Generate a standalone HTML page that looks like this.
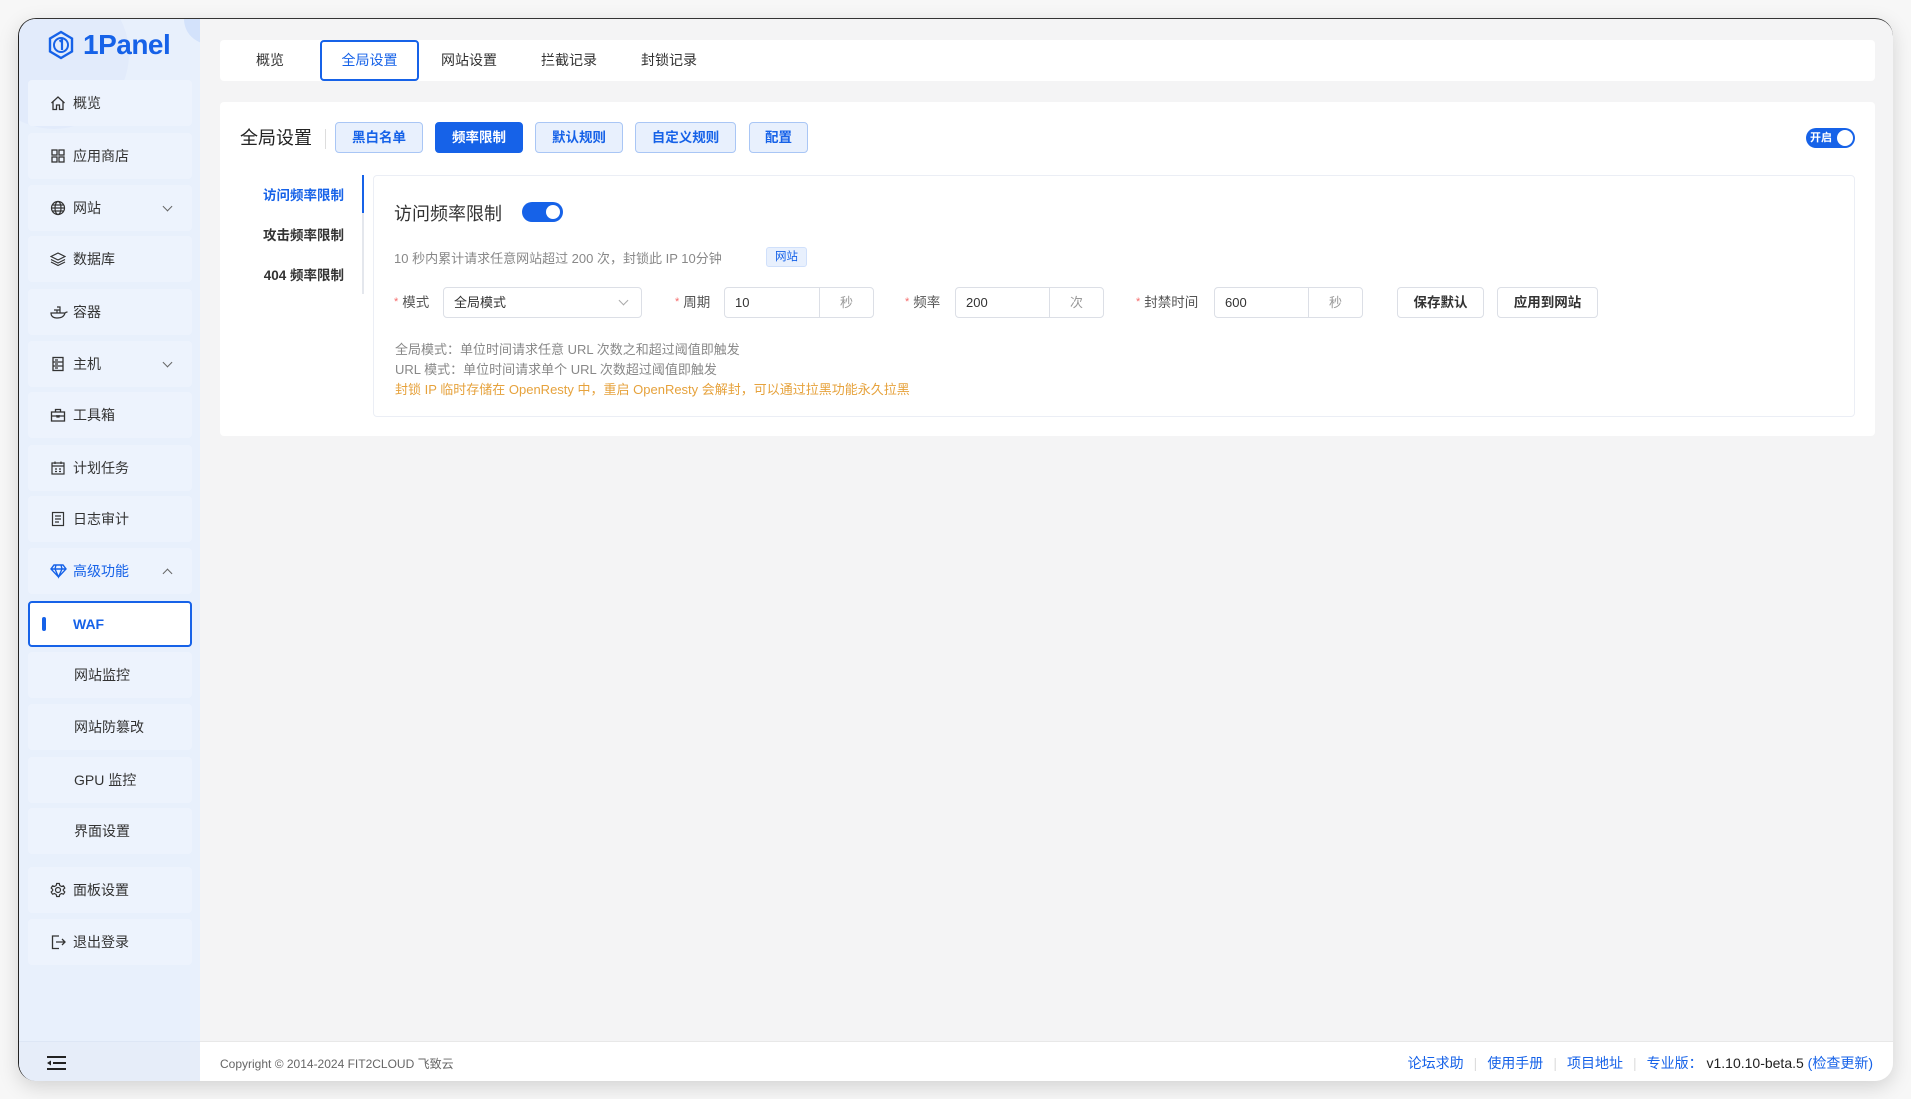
<!DOCTYPE html>
<html><head><meta charset="utf-8"><style>
*{box-sizing:border-box;margin:0;padding:0}
body{width:1911px;height:1099px;background:#f7f7f7;font-family:"Liberation Sans","Noto Sans CJK SC",sans-serif;position:relative;overflow:hidden;color:#1f2329}
.win{position:absolute;left:18px;top:18px;width:1875px;height:1063px;border-radius:18px;overflow:hidden;background:#f4f4f5;box-shadow:0 6px 20px rgba(0,0,0,.15);border-top:1.5px solid #333;border-left:1.5px solid #222}
.side{position:absolute;left:0;top:0;width:181px;height:100%;background:#e8f0fc;overflow:hidden}
.side .deco{position:absolute;left:-40px;top:-40px;width:150px;height:150px;border-radius:50%;background:#e2ebfb}
.side .deco2{position:absolute;left:165px;top:-25px;width:50px;height:50px;border-radius:50%;background:#d3e2fb}
.logo{position:absolute;left:28px;top:10px;display:flex;align-items:center;color:#1662e8;font-weight:bold;font-size:28px;letter-spacing:-.5px}
.mi{position:absolute;left:9px;width:164px;height:46px;background:#edf3fd;border-radius:4px;display:flex;align-items:center;font-size:14px;color:#333;padding-left:45px}
.mi svg{position:absolute;left:22px;top:15px}
.mi .ar{position:absolute;left:136px;top:18px;width:7px;height:7px;border-right:1px solid #666;border-bottom:1px solid #666;transform:rotate(45deg)}
.mi .up{transform:rotate(-135deg);top:22px}
.sub{padding-left:46px}
.waf{background:#fff;border:2px solid #1662e8;color:#1662e8;font-weight:bold;padding-left:43px}
.waf:before{content:"";position:absolute;left:12px;top:14px;width:4px;height:14px;border-radius:2px;background:#1662e8}
.sfoot{position:absolute;left:0;top:1022px;width:181px;height:41px;background:#e6edf9;border-top:1px solid #dde6f5}
.main{position:absolute;left:181px;top:0;right:0;bottom:0}
.card{position:absolute;background:#fff;border-radius:4px}
.tab{position:absolute;top:0;height:41px;line-height:41px;font-size:14px;color:#333;text-align:center}
.btn{position:absolute;top:20px;height:31px;line-height:29px;border:1px solid #a9c6f5;background:#e8f0fd;color:#1662e8;border-radius:4px;font-size:13.5px;font-weight:bold;text-align:center}
.btn.on{background:#1662e8;border-color:#1662e8;color:#fff}
.inp{position:absolute;top:111px;height:31px;border:1px solid #dcdfe6;border-radius:4px;font-size:13px;color:#333;line-height:29px;padding-left:10px}
.inp .suf{position:absolute;right:0;top:0;bottom:0;border-left:1px solid #dcdfe6;color:#999;text-align:center}
.lbl{position:absolute;top:111px;line-height:31px;font-size:13.5px;color:#555}
.lbl b{color:#f56c6c;font-weight:normal;font-size:11px;margin-right:4px;vertical-align:top}
.pb{position:absolute;top:111px;height:31px;line-height:29px;border:1px solid #dcdfe6;border-radius:4px;font-size:13.5px;color:#333;text-align:center;font-weight:bold}
.note{position:absolute;left:21px;font-size:13px;color:#888}
.ft{position:absolute;left:0;right:0;top:1022px;height:41px;background:#fff;border-top:1px solid #e8e8e8;font-size:12.5px}
.ft a{color:#1662e8;text-decoration:none}
</style></head><body>
<div class="win">
 <div class="side">
  <div class="deco"></div><div class="deco2"></div>
  <div class="logo"><svg width="28" height="30" viewBox="0 0 28 30"><path d="M14 2L25 8.5V21.5L14 28L3 21.5V8.5Z" fill="none" stroke="#1662e8" stroke-width="2.4"/><circle cx="14" cy="15" r="7" fill="none" stroke="#1662e8" stroke-width="2"/><path d="M12.5 11.5L15 10V20" stroke="#1662e8" stroke-width="2.2" fill="none"/></svg><span style="margin-left:8px">1Panel</span></div>
  <div class="mi" style="top:61px"><svg width="16" height="16" viewBox="0 0 16 16" fill="none" stroke="#333" stroke-width="1.3"><path d="M1.5 8L8 2L14.5 8M3 7V14.5H6.5V10H9.5V14.5H13V7"/></svg>概览</div>
  <div class="mi" style="top:114px"><svg width="16" height="16" viewBox="0 0 16 16" fill="none" stroke="#333" stroke-width="1.3"><rect x="2" y="2" width="5" height="5"/><rect x="9" y="2" width="5" height="5"/><rect x="2" y="9" width="5" height="5"/><rect x="9" y="9" width="5" height="5"/></svg>应用商店</div>
  <div class="mi" style="top:166px"><svg width="16" height="16" viewBox="0 0 16 16" fill="none" stroke="#333" stroke-width="1.2"><circle cx="8" cy="8" r="6.5"/><ellipse cx="8" cy="8" rx="3" ry="6.5"/><path d="M1.5 8H14.5M2.5 5H13.5M2.5 11H13.5"/></svg>网站<span class="ar"></span></div>
  <div class="mi" style="top:217px"><svg width="16" height="16" viewBox="0 0 16 16" fill="none" stroke="#333" stroke-width="1.2"><path d="M8 2L15 5.5L8 9L1 5.5Z M1 8.5L8 12L15 8.5 M1 11L8 14.5L15 11"/></svg>数据库</div>
  <div class="mi" style="top:270px"><svg width="18" height="16" viewBox="0 0 18 16" fill="none" stroke="#333" stroke-width="1.2"><path d="M1 9H15C14 13 10 14 7 14C3 14 1 12 1 9ZM4 6H7V9M7 6H10V9M7 3H10V6M15 9C16 8 17 8 17.5 8"/></svg>容器</div>
  <div class="mi" style="top:322px"><svg width="16" height="16" viewBox="0 0 16 16" fill="none" stroke="#333" stroke-width="1.3"><rect x="3" y="1.5" width="10" height="13"/><path d="M3 6H13M3 10H13M5 4H8M5 8H8M5 12H8"/></svg>主机<span class="ar"></span></div>
  <div class="mi" style="top:373px"><svg width="16" height="16" viewBox="0 0 16 16" fill="none" stroke="#333" stroke-width="1.3"><rect x="1.5" y="5" width="13" height="9"/><path d="M5.5 5V2.5H10.5V5M1.5 9H14.5M7 8V10H9V8"/></svg>工具箱</div>
  <div class="mi" style="top:426px"><svg width="16" height="16" viewBox="0 0 16 16" fill="none" stroke="#333" stroke-width="1.2"><rect x="2" y="3" width="12" height="11"/><path d="M2 6H14M5 1.5V4M11 1.5V4M5 9H7M9 9H11M5 11.5H7M9 11.5H11"/></svg>计划任务</div>
  <div class="mi" style="top:477px"><svg width="16" height="16" viewBox="0 0 16 16" fill="none" stroke="#333" stroke-width="1.2"><rect x="2.5" y="1.5" width="11" height="13"/><path d="M5 5H11M5 8H11M5 11H9"/></svg>日志审计</div>
  <div class="mi" style="top:529px;color:#1662e8"><svg width="17" height="16" viewBox="0 0 17 16" fill="none" stroke="#1662e8" stroke-width="1.4"><path d="M4 2H13L16 6L8.5 14L1 6Z M1 6H16 M6 2L5 6L8.5 14L12 6L11 2"/></svg>高级功能<span class="ar up" style="border-color:#666"></span></div>
  <div class="mi waf" style="top:582px;height:46px">WAF</div>
  <div class="mi sub" style="top:633px">网站监控</div>
  <div class="mi sub" style="top:685px">网站防篡改</div>
  <div class="mi sub" style="top:738px">GPU 监控</div>
  <div class="mi sub" style="top:789px">界面设置</div>
  <div class="mi" style="top:848px"><svg width="16" height="16" viewBox="0 0 16 16" fill="none" stroke="#333" stroke-width="1.2"><circle cx="8" cy="8" r="2.5"/><path d="M6.7 1.5H9.3L9.8 3.5L11.5 4.5L13.5 3.8L14.8 6L13.3 7.5V8.5L14.8 10L13.5 12.2L11.5 11.5L9.8 12.5L9.3 14.5H6.7L6.2 12.5L4.5 11.5L2.5 12.2L1.2 10L2.7 8.5V7.5L1.2 6L2.5 3.8L4.5 4.5L6.2 3.5Z"/></svg>面板设置</div>
  <div class="mi" style="top:900px"><svg width="16" height="16" viewBox="0 0 16 16" fill="none" stroke="#333" stroke-width="1.3"><path d="M9 2H2.5V14.5H9M6 8H15M12 5L15 8L12 11"/></svg>退出登录</div>
  <div class="sfoot"><svg style="position:absolute;left:28px;top:14px" width="20" height="14" viewBox="0 0 20 14" fill="#222"><rect x="0" y="0" width="19" height="2"/><rect x="6" y="6" width="13" height="2"/><rect x="0" y="12" width="19" height="2"/><path d="M0 7L4 4.5V9.5Z"/></svg></div>
 </div>
 <div class="main">
  <div class="card" style="left:20px;top:21px;width:1655px;height:41px">
   <div class="tab" style="left:20px;width:60px">概览</div>
   <div class="tab" style="left:100px;width:99px;border:2px solid #1662e8;border-radius:4px;line-height:37px;color:#1662e8">全局设置</div>
   <div class="tab" style="left:219px;width:60px">网站设置</div>
   <div class="tab" style="left:319px;width:60px">拦截记录</div>
   <div class="tab" style="left:419px;width:60px">封锁记录</div>
  </div>
  <div class="card" style="left:20px;top:83px;width:1655px;height:334px">
   <div style="position:absolute;left:20px;top:22px;font-size:18px;color:#222">全局设置</div>
   <div style="position:absolute;left:105px;top:27px;width:1px;height:20px;background:#ddd"></div>
   <div class="btn" style="left:115px;width:88px">黑白名单</div>
   <div class="btn on" style="left:215px;width:88px">频率限制</div>
   <div class="btn" style="left:315px;width:88px">默认规则</div>
   <div class="btn" style="left:415px;width:101px">自定义规则</div>
   <div class="btn" style="left:529px;width:59px">配置</div>
   <div style="position:absolute;left:1586px;top:26px;width:49px;height:20px;border-radius:10px;background:#1662e8;color:#fff;font-size:11px;font-weight:bold;line-height:20px;padding-left:4px">开启<span style="position:absolute;right:2px;top:2px;width:16px;height:16px;border-radius:50%;background:#fff"></span></div>
   <div style="position:absolute;left:30px;top:74px;font-size:13.5px;line-height:40px;text-align:right;width:94px;white-space:nowrap"><div style="color:#1662e8;font-weight:bold">访问频率限制</div><div style="font-weight:bold;color:#333">攻击频率限制</div><div style="font-weight:bold;color:#333">404 频率限制</div></div>
   <div style="position:absolute;left:142px;top:73px;width:2px;height:119px;background:#e4e7ed"></div>
   <div style="position:absolute;left:142px;top:73px;width:2px;height:38px;background:#1662e8"></div>
   <div style="position:absolute;left:153px;top:73px;width:1482px;height:242px;border:1px solid #ebeef5;border-radius:4px">
    <div style="position:absolute;left:20px;top:24px;font-size:18px;color:#333">访问频率限制</div>
    <div style="position:absolute;left:148px;top:26px;width:41px;height:20px;border-radius:10px;background:#1662e8"><span style="position:absolute;right:3px;top:3px;width:14px;height:14px;border-radius:50%;background:#fff"></span></div>
    <div style="position:absolute;left:20px;top:72px;font-size:13px;color:#888">10 秒内累计请求任意网站超过 200 次，封锁此 IP 10分钟</div>
    <div style="position:absolute;left:392px;top:71px;width:41px;height:20px;background:#e8f0fd;border:1px solid #d0e0fb;border-radius:3px;color:#1662e8;font-size:11.5px;text-align:center;line-height:18px">网站</div>
    <div class="lbl" style="left:20px"><b>*</b>模式</div>
    <div class="inp" style="left:69px;width:199px">全局模式<span style="position:absolute;right:14px;top:9px;width:7px;height:7px;border-right:1px solid #aaa;border-bottom:1px solid #aaa;transform:rotate(45deg)"></span></div>
    <div class="lbl" style="left:301px"><b>*</b>周期</div>
    <div class="inp" style="left:350px;width:150px">10<span class="suf" style="width:54px">秒</span></div>
    <div class="lbl" style="left:531px"><b>*</b>频率</div>
    <div class="inp" style="left:581px;width:149px">200<span class="suf" style="width:54px">次</span></div>
    <div class="lbl" style="left:762px"><b>*</b>封禁时间</div>
    <div class="inp" style="left:840px;width:149px">600<span class="suf" style="width:54px">秒</span></div>
    <div class="pb" style="left:1023px;width:87px">保存默认</div>
    <div class="pb" style="left:1123px;width:101px">应用到网站</div>
    <div class="note" style="top:163px">全局模式：单位时间请求任意 URL 次数之和超过阈值即触发</div>
    <div class="note" style="top:183px">URL 模式：单位时间请求单个 URL 次数超过阈值即触发</div>
    <div class="note" style="top:203px;color:#e6a23c">封锁 IP 临时存储在 OpenResty 中，重启 OpenResty 会解封，可以通过拉黑功能永久拉黑</div>
   </div>
  </div>
  <div class="ft">
   <span style="position:absolute;left:20px;top:13px;color:#666;font-size:12px">Copyright © 2014-2024 FIT2CLOUD 飞致云</span>
   <span style="position:absolute;right:20px;top:11px;color:#222;font-size:14px"><a>论坛求助</a><span style="color:#ddd;margin:0 10px">|</span><a>使用手册</a><span style="color:#ddd;margin:0 10px">|</span><a>项目地址</a><span style="color:#ddd;margin:0 10px">|</span><a>专业版：</a> v1.10.10-beta.5 <a>(检查更新)</a></span>
  </div>
 </div>
</div>
</body></html>
